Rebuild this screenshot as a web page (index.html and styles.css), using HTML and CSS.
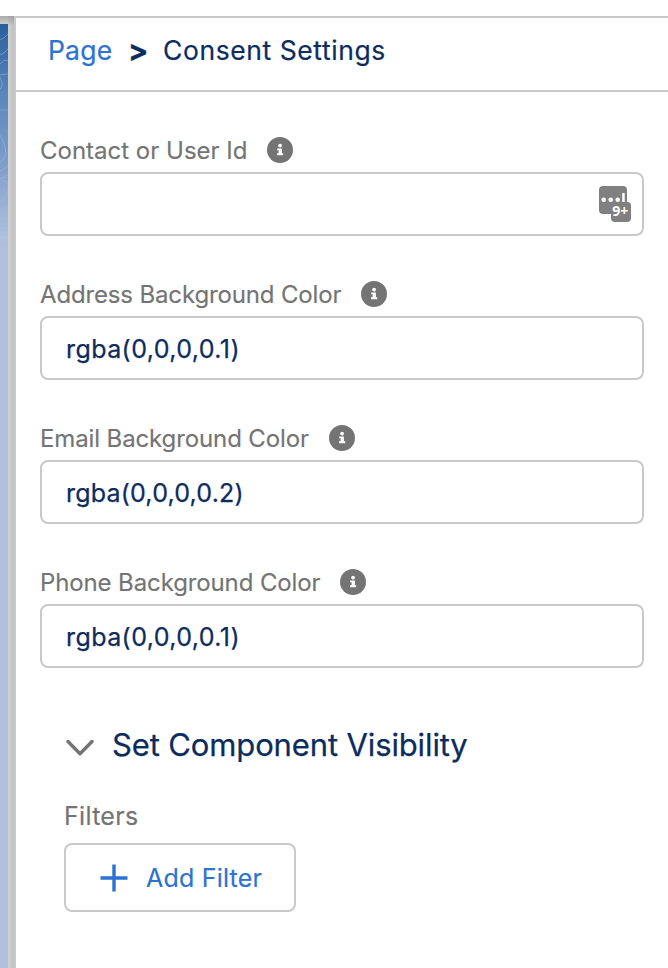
FILE: index.html
```html
<!DOCTYPE html>
<html lang="en">
<head>
<meta charset="utf-8">
<title>Consent Settings</title>
<link rel="stylesheet" href="styles.css">
</head>
<body>
<svg class="defs" aria-hidden="true">
  <symbol id="info" viewBox="0 0 26 26">
    <circle cx="13" cy="13" r="13" fill="#747474"/>
    <circle cx="13.1" cy="8.6" r="1.9" fill="#fff"/>
    <path d="M10.2 11.4h4.7v4.9h1.3v1.9h-6.2v-1.9h1.6v-3h-1.4z" fill="#fff"/>
  </symbol>
</svg>
<div class="workspace">
  <div class="canvas-edge">
    <svg class="pattern" width="8" height="944" viewBox="0 0 8 944" fill="none" stroke="#9ebbe0" stroke-opacity=".5">
      <path d="M0 16q5-2 8-6M0 31q5-2 8-6M0 40q4-5 8-4M0 51q4-1 8-1M0 53q3 5 2 10l-2 2M0 86h8M0 111q9 15 4 24l-4 3M0 147q5-1 8-6M0 155q5-1 8-4M0 157q8-2 8 8q-1 11-8 13M0 186q3-5 8-2M0 197h8M0 202h8M0 207q5-3 8-1M0 211h8M0 219h8"/>
    </svg>
  </div>
  <div class="gutter"></div>
  <main class="panel">
    <header class="crumbs"><a class="page">Page</a><b class="sep">&gt;</b><span class="current">Consent Settings</span></header>
    <section class="fields">
      <div class="field">
        <div class="label"><span>Contact or User Id</span><svg class="info"><use href="#info"/></svg></div>
        <div class="input empty">
          <svg width="34" height="38" viewBox="0 0 34 38">
            <rect x="1" y="1" width="28" height="28" rx="4" fill="#808080"/>
            <rect x="13" y="17" width="20" height="20" rx="4" fill="#808080"/>
            <g fill="#fff"><circle cx="5.7" cy="14.8" r="2.3"/><circle cx="12.7" cy="14.8" r="2.3"/><circle cx="19.7" cy="14.8" r="2.3"/><rect x="24.2" y="8" width="2.5" height="9"/></g>
            <text class="count" x="14.3" y="31">9+</text>
          </svg>
        </div>
      </div>
      <div class="field">
        <div class="label"><span class="tight">Address Background Color</span><svg class="info"><use href="#info"/></svg></div>
        <div class="input"><span>rgba(0,0,0,0.1)</span></div>
      </div>
      <div class="field">
        <div class="label"><span class="snug">Email Background Color</span><svg class="info"><use href="#info"/></svg></div>
        <div class="input"><span class="narrow">rgba(0,0,0,0.2)</span></div>
      </div>
      <div class="field">
        <div class="label"><span class="snug">Phone Background Color</span><svg class="info"><use href="#info"/></svg></div>
        <div class="input"><span>rgba(0,0,0,0.1)</span></div>
      </div>
    </section>
    <section class="visibility">
      <h2><svg width="28" height="18" viewBox="0 0 28 18" fill="none" stroke="#747474" stroke-width="3.4" stroke-linecap="round" stroke-linejoin="round"><path d="M2 2.5l12 12.3 12-12.3"/></svg><span>Set Component Visibility</span></h2>
      <div class="filters">Filters</div>
      <div class="add" role="button"><svg width="28" height="28" viewBox="0 0 28 28" stroke="#2b73d0" stroke-width="3.4"><path d="M14 .5v27M.5 14h27"/></svg><span>Add Filter</span></div>
    </section>
  </main>
</div>
</body>
</html>
```
FILE: styles.css
```css
* { box-sizing: border-box; }
body { margin: 0; padding-top: 16px; height: 968px; overflow: hidden; background: #fff; font-family: Inter, "Liberation Sans", sans-serif; font-size: 24px; color: #0d2c5e; }
.defs { display: none; }
svg { display: block; flex: none; }
.workspace { display: flex; height: 952px; }
.canvas-edge { width: 8px; padding-top: 8px; background: linear-gradient(#aaa, #ccc 8px, transparent 8px), linear-gradient(#2b5f9e 8px, #5a88bb 80px, #7f9fcb 150px, #b0c0dd 220px, #b0c0dd); }
.gutter { width: 6px; background: linear-gradient(rgba(140,140,140,.65), transparent 10px), linear-gradient(90deg, #d2d2d2, #bfbfbf); }
.panel { flex: 1; border-left: 2px solid #c9c9c9; border-top: 2px solid #c9c9c9; }
.crumbs { height: 74px; border-bottom: 2px solid #c9c9c9; display: flex; align-items: center; padding: 0 0 9px 32px; font-size: 26.5px; white-space: nowrap; -webkit-text-stroke: .2px; }
.page, .add { color: #2b73d0; }
.page { width: 80px; letter-spacing: .2px; }
.sep { width: 35px; font-size: 30px; }
.current { letter-spacing: .58px; }
.fields { padding: 40px 24px 0; }
.field { height: 144px; }
.label { display: flex; align-items: center; gap: 20px; height: 40px; padding-bottom: 4px; color: #747474; white-space: nowrap; }
.label span, .filters, .add { -webkit-text-stroke: .15px; }
.tight { letter-spacing: -.15px; }
.snug { letter-spacing: -.12px; }
.info { width: 26px; height: 26px; }
.input { height: 64px; border: 2px solid #c9c9c9; border-radius: 8px; display: flex; align-items: center; padding: 2px 10px 0 24px; font-size: 25px; letter-spacing: .42px; -webkit-text-stroke: .25px; }
.narrow { letter-spacing: .2px; }
.empty { justify-content: flex-end; padding: 0 10px 0 0; }
.count { font: 700 14px "Open Sans", sans-serif; letter-spacing: 0; fill: #fff; -webkit-text-stroke: 0; }
.visibility { padding: 15px 48px 0; }
h2 { display: flex; align-items: center; gap: 18px; height: 44px; margin: 0; padding: 0 0 2px 2px; font-size: 31px; font-weight: 400; letter-spacing: -.13px; white-space: nowrap; -webkit-text-stroke: .25px; }
h2 svg { margin-top: 8px; }
.filters { height: 76px; padding-top: 34px; line-height: 30px; font-size: 25px; letter-spacing: .3px; color: #747474; }
.add { width: 232px; height: 69px; border: 2px solid #c9c9c9; border-radius: 8px; display: flex; align-items: center; gap: 18px; padding: 1px 0 0 34px; font-size: 25px; letter-spacing: .2px; white-space: nowrap; }
```
